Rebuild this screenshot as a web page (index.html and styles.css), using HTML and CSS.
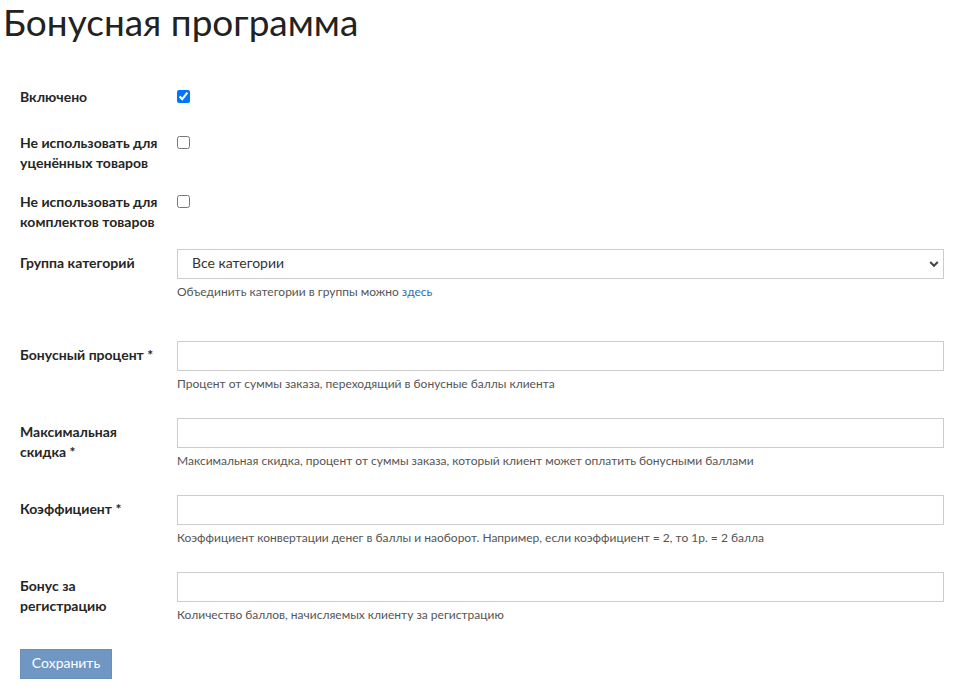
FILE: index.html
```html
<!DOCTYPE html>
<html lang="ru">
<head>
<meta charset="utf-8">
<title>Бонусная программа</title>
<link rel="stylesheet" href="styles.css">
</head>
<body>
<h1 class="title">Бонусная программа</h1>
<form class="form">
  <div class="row row-check row-first">
    <label class="label">Включено</label>
    <div class="field"><input type="checkbox" class="check" checked></div>
  </div>
  <div class="row row-check row-second">
    <label class="label">Не использовать для уценённых товаров</label>
    <div class="field"><input type="checkbox" class="check"></div>
  </div>
  <div class="row row-check row-third">
    <label class="label">Не использовать для комплектов товаров</label>
    <div class="field"><input type="checkbox" class="check"></div>
  </div>
  <div class="row row-group">
    <label class="label label-input">Группа категорий</label>
    <div class="field">
      <div class="select-wrap">
        <select class="control select"><option>Все категории</option></select>
        <svg class="chevron" width="10" height="8" viewBox="0 0 10 8"><path d="M1.2 2 L5 5.8 L8.8 2" fill="none" stroke="#444" stroke-width="2"/></svg>
      </div>
      <div class="help">Объединить категории в группы можно <a href="#" class="link">здесь</a></div>
    </div>
  </div>
  <div class="row">
    <label class="label label-input">Бонусный процент *</label>
    <div class="field">
      <input type="text" class="control">
      <div class="help">Процент от суммы заказа, переходящий в бонусные баллы клиента</div>
    </div>
  </div>
  <div class="row">
    <label class="label label-input">Максимальная скидка *</label>
    <div class="field">
      <input type="text" class="control">
      <div class="help">Максимальная скидка, процент от суммы заказа, который клиент может оплатить бонусными баллами</div>
    </div>
  </div>
  <div class="row">
    <label class="label label-input">Коэффициент *</label>
    <div class="field">
      <input type="text" class="control">
      <div class="help">Коэффициент конвертации денег в баллы и наоборот. Например, если коэффициент = 2, то 1р. = 2 балла</div>
    </div>
  </div>
  <div class="row">
    <label class="label label-input">Бонус за регистрацию</label>
    <div class="field">
      <input type="text" class="control">
      <div class="help">Количество баллов, начисляемых клиенту за регистрацию</div>
    </div>
  </div>
  <button type="button" class="btn">Сохранить</button>
</form>
</body>
</html>
```
FILE: styles.css
```css
html, body {
  margin: 0;
  padding: 0;
  background: #fff;
}
body {
  font-family: Lato, "Noto Sans", sans-serif;
  color: #222;
}
.title {
  font-family: Lato, "Noto Sans", sans-serif;
  font-size: 37px;
  font-weight: 400;
  line-height: 44px;
  margin: 0 0 0 3px;
  color: #222;
}
.form {
  padding: 43px 11px 0 20px;
}
.row {
  display: flex;
  align-items: flex-start;
  margin-bottom: 25px;
}
.row-first { margin-bottom: 26px; }
.row-second { margin-bottom: 19px; }
.row-third { margin-bottom: 17px; }
.row-group { margin-bottom: 40px; }
.label {
  width: 157px;
  flex: none;
  font-size: 14px;
  font-weight: 700;
  line-height: 20px;
  color: #262626;
  padding-right: 12px;
  box-sizing: border-box;
}
.label-input {
  padding-top: 4px;
}
.field {
  flex: 1;
  min-width: 0;
}
.check {
  margin: 2px 0 0 0;
  width: 13px;
  height: 13px;
}
.control {
  display: block;
  box-sizing: border-box;
  width: 100%;
  height: 30px;
  margin: 0;
  border: 1px solid #ccc;
  background: #fff;
  font-family: Lato, "Noto Sans", sans-serif;
  font-size: 14px;
  color: #333;
  padding: 0 14px;
  border-radius: 0;
  outline: none;
}
.select-wrap {
  position: relative;
}
.select {
  appearance: none;
  -webkit-appearance: none;
  padding-bottom: 3px;
}
.chevron {
  position: absolute;
  right: 5px;
  top: 11px;
}
.help {
  margin-top: 4px;
  font-size: 12px;
  line-height: 18px;
  color: #555;
}
.link {
  color: #2f6fa7;
  text-decoration: none;
}
.btn {
  display: block;
  width: 92px;
  height: 30px;
  margin-top: 0;
  padding: 0 0 3px 0;
  border: 1px solid #6a8fbb;
  background: #7096c3;
  color: #fff;
  font-family: Lato, "Noto Sans", sans-serif;
  font-size: 14px;
  border-radius: 0;
}
```
